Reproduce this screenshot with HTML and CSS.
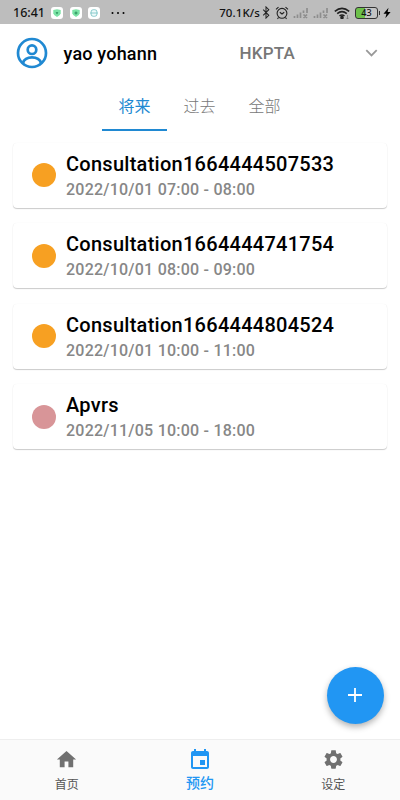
FILE: index.html
```
<!DOCTYPE html>
<html lang="zh-CN">
<head>
    <meta charset="UTF-8">
    <meta name="viewport" content="width=device-width, initial-scale=1.0">
    <title>预约</title>
    <link rel="stylesheet" href="styles.css">
</head>
<body>
    <!-- 状态栏 -->
    <div class="status-bar">
        <span class="time">16:41</span>
        <div class="apps">
            <svg class="app" viewBox="0 0 12 12"><path d="M2.3 3 6 2.2 9.700 3v3.200Q9.300 8.800 6 10 2.700 8.800 2.300 6.200z" fill="#7be3a6"/><path d="M4.600 5.200h2.800L6 7.600z" fill="#278e59"/></svg>
            <svg class="app" viewBox="0 0 12 12"><path d="M2.3 3 6 2.2 9.700 3v3.200Q9.300 8.800 6 10 2.700 8.800 2.300 6.200z" fill="#7be3a6"/><path d="M6 4.500v3M4.500 6h3" stroke="#278e59"/></svg>
            <svg class="app" viewBox="0 0 12 12"><rect x="3" y="2.700" width="6" height="6.600" rx="2.300" fill="#eefafa" stroke="#70bfc0" stroke-width=".8"/><path d="M2.300 6h7.400" stroke="#70bfc0" stroke-width=".8"/></svg>
        </div>
        <svg class="dots" viewBox="0 0 14 4"><circle cx="1.500" cy="2" r="1"/><circle cx="7" cy="2" r="1"/><circle cx="12.500" cy="2" r="1"/></svg>
        <span class="speed">70.1K/s</span>
        <svg class="bluetooth" viewBox="0 0 8 14"><path d="M1 4l6 6-3 3V1l3 3-6 6"/></svg>
        <svg class="alarm" viewBox="0 0 14 14"><circle cx="7" cy="7.300" r="4.900"/><path d="M1 3.400 3.500 1.200M13 3.400 10.500 1.200M4.800 6.300 7 8l2.200-1.700M3.500 11.500l-1 1.300M10.500 11.500l1 1.300"/></svg>
        <svg class="signal" viewBox="0 0 16 12"><path d="M1.500 9v2M4.500 7.500V11M7.500 5.500V11M10.500 3.500V6M14 1v5M10.500 7.500l3.500 3.500M14 7.500 10.500 11"/></svg>
        <svg class="signal" viewBox="0 0 16 12"><path d="M1.500 9v2M4.500 7.500V11M7.500 5.500V11M10.500 3.500V6M14 1v5M10.500 7.500l3.500 3.500M14 7.500 10.500 11"/></svg>
        <svg class="wifi" viewBox="0 0 16 12"><path d="M.8 4.300Q8-1.700 15.200 4.300M3.200 6.700Q8 2.700 12.800 6.700M5.500 9Q8 7 10.500 9"/><circle cx="8" cy="10.600" r="1"/><path class="thin" d="M13.500 8v4M12.300 10.800l1.200 1.200 1.200-1.200"/></svg>
        <div class="battery"><span class="battery-level">43</span></div>
        <svg class="bolt" viewBox="0 0 8 12"><path d="M5.500.8.5 6.700h3L2.300 11.200 7.600 5h-3z"/></svg>
    </div>

    <!-- 顶部用户信息 -->
    <div class="header">
        <svg class="avatar" viewBox="0 0 32 32"><circle cx="16" cy="16" r="14"/><circle cx="16" cy="12.700" r="4.300"/><path d="M7 26c1.200-4 4.200-5.600 9-5.600s7.800 1.600 9 5.600"/></svg>
        <span class="user-name">yao yohann</span>
        <span class="clinic">HKPTA</span>
        <svg class="chevron" viewBox="0 0 12 8"><path d="M.8 1.200 6 6.400l5.200-5.200"/></svg>
    </div>

    <div class="tabs">
        <div class="tab active">将来</div>
        <div class="tab">过去</div>
        <div class="tab">全部</div>
    </div>

    <!-- 预约列表 -->
    <div class="list">
        <div class="card">
            <span class="dot"></span>
            <div class="info">
                <div class="title">Consultation1664444507533</div>
                <div class="date">2022/10/01 07:00 - 08:00</div>
            </div>
        </div>
        <div class="card">
            <span class="dot"></span>
            <div class="info">
                <div class="title">Consultation1664444741754</div>
                <div class="date">2022/10/01 08:00 - 09:00</div>
            </div>
        </div>
        <div class="card">
            <span class="dot"></span>
            <div class="info">
                <div class="title">Consultation1664444804524</div>
                <div class="date">2022/10/01 10:00 - 11:00</div>
            </div>
        </div>
        <div class="card">
            <span class="dot pink"></span>
            <div class="info">
                <div class="title">Apvrs</div>
                <div class="date">2022/11/05 10:00 - 18:00</div>
            </div>
        </div>
    </div>

    <div class="fab">
        <svg viewBox="0 0 16 16"><path d="M8 1v14M1 8h14"/></svg>
    </div>

    <!-- 底部导航 -->
    <div class="nav">
        <div class="nav-item">
            <svg viewBox="0 0 24 24"><path d="M10 20v-6h4v6h5v-8h3L12 3 2 12h3v8z"/></svg>
            <span>首页</span>
        </div>
        <div class="nav-item active">
            <svg viewBox="0 0 24 24"><path d="M17 12h-5v5h5v-5zM16 1v2H8V1H6v2H5c-1.110 0-1.990.9-1.990 2L3 19c0 1.100.89 2 2 2h14c1.100 0 2-.9 2-2V5c0-1.100-.9-2-2-2h-1V1h-2zm3 18H5V8h14v11z"/></svg>
            <span>预约</span>
        </div>
        <div class="nav-item">
            <svg viewBox="0 0 24 24"><path d="M19.140 12.940c.04-.3.060-.61.060-.94 0-.32-.02-.64-.07-.94l2.030-1.580c.18-.14.230-.41.120-.61l-1.920-3.320c-.12-.22-.37-.29-.59-.22l-2.390.96c-.5-.38-1.030-.7-1.620-.94l-.36-2.540c-.04-.24-.24-.41-.48-.41h-3.840c-.24 0-.43.170-.47.410l-.36 2.540c-.59.240-1.130.570-1.620.940l-2.390-.96c-.22-.08-.47 0-.59.220L2.740 8.870c-.12.210-.08.470.12.610l2.030 1.580c-.05.3-.09.630-.09.940s.02.640.070.940l-2.030 1.580c-.18.140-.23.410-.12.610l1.920 3.320c.12.220.37.290.59.220l2.390-.96c.5.380 1.030.7 1.620.940l.36 2.540c.05.240.24.410.48.410h3.840c.24 0 .44-.17.470-.41l.36-2.540c.59-.24 1.130-.56 1.620-.94l2.390.96c.22.080.47 0 .59-.22l1.920-3.320c.12-.22.070-.47-.12-.61l-2.010-1.580zM12 15.600c-1.980 0-3.600-1.620-3.600-3.600s1.620-3.600 3.600-3.600 3.600 1.620 3.600 3.600-1.620 3.600-3.600 3.600z"/></svg>
            <span>设定</span>
        </div>
    </div>
</body>
</html>
```
FILE: styles.css
```
:root {
    --primary-color: #2196f3;
    --header-blue: #2089d2;
    --gray: #777;
}

* {
    box-sizing: border-box;
}

body {
    margin: 0;
    height: 100vh;
    display: flex;
    flex-direction: column;
    background: #fff;
    color: #000;
    font-family: Roboto, "Noto Sans CJK SC", sans-serif;
    overflow: hidden;
}

svg {
    display: block;
    flex: none;
}

/* 状态栏 */
.status-bar {
    height: 24px;
    flex: none;
    display: flex;
    align-items: center;
    padding: 1px 9px 0 13px;
    background: #bdbdbd;
    font-family: "Noto Sans", sans-serif;
    color: #111;
}

.time {
    width: 38px;
    font-size: 12.5px;
    font-weight: 500;
}

.apps {
    display: flex;
    gap: 6.5px;
}

.app {
    width: 12px;
    height: 12px;
    border-radius: 3px;
    background: #fff;
}

.dots {
    width: 14px;
    height: 4px;
    margin-left: 11px;
}

.speed {
    margin-left: auto;
    font-size: 11.5px;
    font-weight: 500;
    letter-spacing: 0.1px;
}

.bluetooth,
.alarm,
.signal,
.wifi {
    fill: none;
    stroke: #222;
    stroke-width: 1.1;
}

.bluetooth {
    width: 8px;
    height: 13px;
    margin-left: 2px;
}

.alarm {
    width: 14px;
    height: 14px;
    margin-left: 5px;
}

.signal {
    width: 16px;
    height: 12px;
    margin-left: 4px;
    stroke: #8d8d8d;
    stroke-width: 1.7;
}

.wifi {
    width: 16px;
    height: 12px;
    margin-left: 5px;
    stroke-width: 1.6;
}

.wifi .thin {
    stroke: #777;
    stroke-width: 0.8;
}

.battery {
    position: relative;
    width: 23px;
    height: 12px;
    margin: 0 2px 0 5px;
    border: 1.5px solid #333;
    border-radius: 3px;
    background: linear-gradient(90deg, #6cc04a 42%, #c4c4c4 42%);
}

.battery::after {
    content: "";
    position: absolute;
    right: -3px;
    top: 3px;
    width: 1px;
    height: 4px;
    background: #333;
}

.battery-level {
    display: block;
    font-size: 9px;
    font-weight: 500;
    line-height: 10px;
    text-align: center;
}

.bolt {
    width: 8px;
    height: 12px;
    margin-left: 3px;
}

/* 顶部 */
.header {
    height: 58px;
    flex: none;
    display: flex;
    align-items: center;
    padding: 0 22px 0 15.5px;
}

.avatar {
    width: 32px;
    height: 32px;
    fill: none;
    stroke: var(--header-blue);
    stroke-width: 2.7;
}

.user-name {
    width: 176px;
    margin-left: 16px;
    font-size: 18px;
    font-weight: 500;
    letter-spacing: 0.2px;
}

.clinic {
    font-size: 17px;
    font-weight: 500;
    letter-spacing: 0.2px;
    color: var(--gray);
}

.chevron {
    width: 13px;
    height: 8px;
    margin-left: auto;
    fill: none;
    stroke: #999;
    stroke-width: 1.8;
}

/* 标签页 */
.tabs {
    height: 49px;
    flex: none;
    display: flex;
    justify-content: center;
    padding-right: 1px;
}

.tab {
    width: 65px;
    padding-top: 2px;
    border-bottom: 2px solid transparent;
    font-size: 16px;
    font-weight: 300;
    line-height: 45px;
    text-align: center;
    color: var(--gray);
}

.tab.active {
    color: var(--header-blue);
    border-color: var(--header-blue);
    font-weight: 400;
}

/* 列表 */
.list {
    flex: 1;
    display: flex;
    flex-direction: column;
    gap: 15.5px;
    padding: 11.5px 13px;
}

.card {
    height: 65px;
    flex: none;
    display: flex;
    align-items: center;
    padding-left: 18.5px;
    border-radius: 4px;
    background: #fff;
    box-shadow: 0 1px 1px rgba(0, 0, 0, 0.2), 0 0 1px rgba(0, 0, 0, 0.08);
}

.dot {
    width: 24px;
    height: 24px;
    border-radius: 50%;
    background: #f7a022;
}

.dot.pink {
    background: #d89598;
}

.info {
    padding-top: 2.5px;
    margin-left: 10.5px;
}

.title {
    font-size: 20px;
    font-weight: 500;
    line-height: 26px;
    letter-spacing: 0.27px;
}

.date {
    font-size: 16px;
    font-weight: 500;
    line-height: 25px;
    letter-spacing: 0.22px;
    color: #878787;
}

/* 悬浮按钮 */
.fab {
    position: absolute;
    right: 16.5px;
    bottom: 76.5px;
    width: 57px;
    height: 57px;
    display: flex;
    align-items: center;
    justify-content: center;
    border-radius: 50%;
    background: var(--primary-color);
    box-shadow: 0 3px 6px rgba(0, 0, 0, 0.3);
}

.fab svg {
    width: 16px;
    height: 16px;
    stroke: #fff;
    stroke-width: 1.8;
}

/* 底部导航 */
.nav {
    height: 61px;
    flex: none;
    display: flex;
    border-top: 1px solid #eee;
    background: #fafafa;
}

.nav-item {
    flex: 1;
    display: flex;
    flex-direction: column;
    align-items: center;
    padding-top: 8px;
    font-size: 12px;
    line-height: 18px;
    color: #555;
}

.nav-item svg {
    width: 23px;
    height: 23px;
    margin-bottom: 5px;
    fill: #707070;
}

.nav-item.active {
    font-size: 14px;
    font-weight: 500;
    color: var(--primary-color);
}

.nav-item.active svg {
    width: 24px;
    height: 24px;
    margin-bottom: 2px;
    fill: var(--primary-color);
}
```
